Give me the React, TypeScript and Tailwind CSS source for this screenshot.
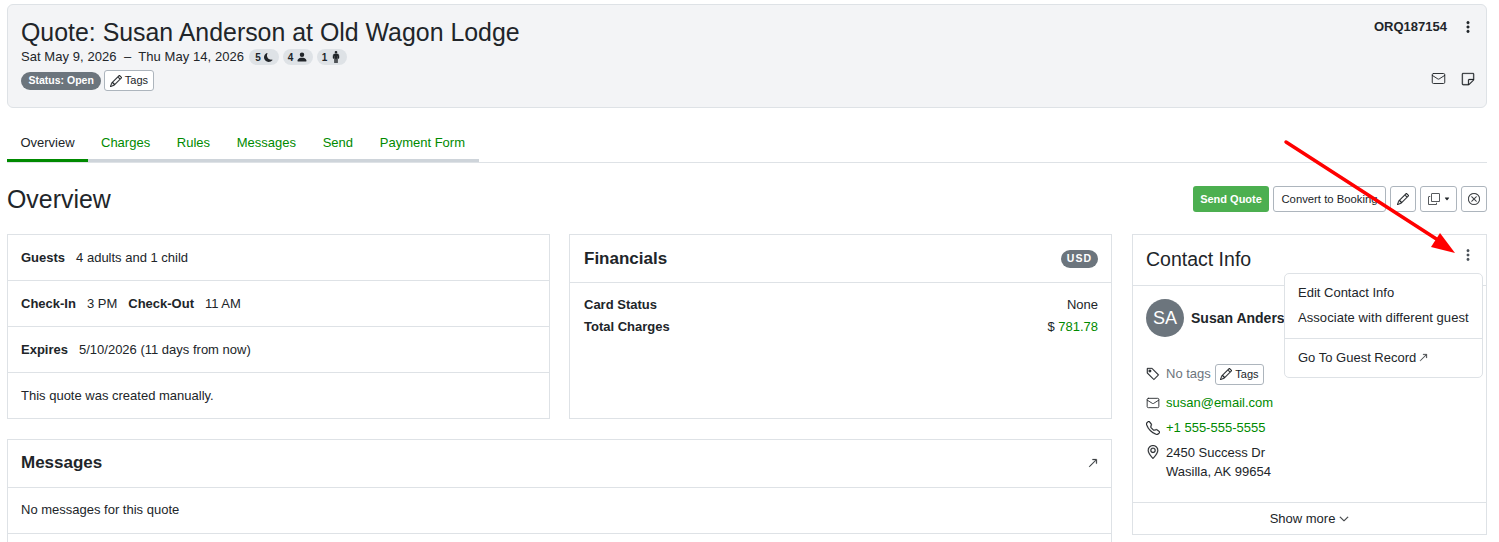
import React from 'react';
import { Mail } from 'lucide-react';
import {
  BsThreeDotsVertical,
  BsSticky,
  BsPencil,
  BsCopy,
  BsXCircle,
  BsTag,
  BsTelephone,
  BsGeoAlt,
  BsChevronDown,
  BsArrowUpRight,
  BsMoonFill,
  BsPersonFill,
  BsPersonStanding,
  BsCaretDownFill,
} from 'react-icons/bs';

const tabs = ['Charges', 'Rules', 'Messages', 'Send', 'Payment Form'];

const TagsButton = () => (
  <button className="flex h-[21px] items-center gap-[3px] rounded-[3px] border border-[#adb5bd] bg-white px-[4.5px] text-[11px] text-[#212529]">
    <BsPencil className="h-[12px] w-[12px] stroke-[0.4px]" />
    Tags
  </button>
);

const CountPill = ({ n, children }: { n: number; children: React.ReactNode }) => (
  <span className="flex h-[16px] w-[30px] items-center justify-center gap-[3px] rounded-full bg-[#dee2e6] text-[10px] font-bold text-[#212529]">
    {n}
    {children}
  </span>
);

const App = () => {
  return (
    <div className="relative h-[542px] w-[1499px] overflow-hidden bg-white pl-[7px] pr-[12px] pt-[4px] font-['Liberation_Sans',Arial,sans-serif] text-[13px] text-[#212529]">
      {/* Header */}
      <div className="flex h-[104px] justify-between rounded-[6px] border border-[#dee2e6] bg-[#f3f4f6] pl-[13px] pr-[11px]">
        <div>
          <h1 className="mt-[11px] text-[24.9px] leading-[32px]">Quote: Susan Anderson at Old Wagon Lodge</h1>
          <div className="-mt-[1px] flex h-[20px] items-center gap-[4px]">
            <span className="mr-[1px] tracking-[0.06px]">Sat May 9, 2026 &nbsp;–&nbsp; Thu May 14, 2026</span>
            <CountPill n={5}><BsMoonFill className="h-[9px] w-[9px]" /></CountPill>
            <CountPill n={4}><BsPersonFill className="h-[12px] w-[12px]" /></CountPill>
            <CountPill n={1}><BsPersonStanding className="h-[12px] w-[12px] stroke-[0.5px]" /></CountPill>
          </div>
          <div className="mt-[3px] flex items-center gap-[3px]">
            <span className="flex h-[18px] items-center rounded-full bg-[#6c757d] px-[7.5px] text-[10.5px] font-bold text-white">Status: Open</span>
            <TagsButton />
          </div>
        </div>
        <div className="flex flex-col items-end justify-between pb-[21px] pt-[12px]">
          <div className="flex items-center gap-[14px]">
            <span className="text-[13px] font-bold">ORQ187154</span>
            <BsThreeDotsVertical className="h-[14px] w-[14px] stroke-[0.5px]" />
          </div>
          <div className="flex items-center gap-[15px]">
            <Mail className="h-[15px] w-[15px]" strokeWidth={1.5} />
            <BsSticky className="h-[14px] w-[14px] stroke-[0.3px]" />
          </div>
        </div>
      </div>

      {/* Tabs */}
      <div className="mt-[19px] border-b border-[#dee2e6]">
        <div className="flex h-[35px] w-[472px] items-center border-b-[3px] border-[#ced4da]">
          <div className="-mb-[3px] flex h-[35px] w-[81px] items-center justify-center border-b-[3px] border-[#008a00]">Overview</div>
          <div className="flex items-center gap-[26.7px] whitespace-nowrap pl-[13px] text-[#008a00]">
            {tabs.map((t) => (
              <span key={t}>{t}</span>
            ))}
          </div>
        </div>
      </div>

      {/* Page heading */}
      <div className="mt-[23px] flex h-[26px] items-center justify-between">
        <h2 className="text-[24.9px] leading-[26px]">Overview</h2>
        <div className="flex items-center gap-[4px] text-[11px]">
          <button className="h-[26px] w-[76px] rounded-[3px] bg-[#4caf50] font-bold text-white">Send Quote</button>
          <button className="h-[26px] w-[113px] rounded-[3px] border border-[#adb5bd] text-[11.3px]">Convert to Booking</button>
          <button className="flex h-[26px] w-[26px] items-center justify-center rounded-[3px] border border-[#adb5bd]"><BsPencil className="h-[12px] w-[12px] stroke-[0.4px]" /></button>
          <button className="flex h-[26px] w-[37px] items-center justify-center gap-[4px] rounded-[3px] border border-[#adb5bd]"><BsCopy className="h-[12px] w-[12px]" /><BsCaretDownFill className="h-[6px] w-[6px]" /></button>
          <button className="flex h-[26px] w-[26px] items-center justify-center rounded-[3px] border border-[#adb5bd]"><BsXCircle className="h-[12px] w-[12px] stroke-[0.3px]" /></button>
        </div>
      </div>

      {/* Cards */}
      <div className="mt-[22px] grid grid-cols-[1105px_355px] gap-x-[20px]">
        <div className="flex flex-col gap-[20px]">
          <div className="grid grid-cols-[543px_543px] gap-x-[19px]">
            <div className="h-[185px] border border-[#dee2e6]">
              <div className="flex h-[46px] items-center gap-[11px] border-b border-[#dee2e6] pl-[13px]"><b>Guests</b><span>4 adults and 1 child</span></div>
              <div className="flex h-[46px] items-center border-b border-[#dee2e6] pl-[13px]"><b>Check-In</b><span className="ml-[11px]">3 PM</span><b className="ml-[11px]">Check-Out</b><span className="ml-[11px]">11 AM</span></div>
              <div className="flex h-[46px] items-center gap-[11px] border-b border-[#dee2e6] pl-[13px]"><b>Expires</b><span>5/10/2026 (11 days from now)</span></div>
              <div className="flex h-[45px] items-center pl-[13px]">This quote was created manually.</div>
            </div>
            <div className="h-[185px] border border-[#dee2e6]">
              <div className="flex h-[48px] items-center justify-between border-b border-[#dee2e6] pl-[14px] pr-[13px]">
                <b className="text-[17px]">Financials</b>
                <span className="flex h-[18px] items-center rounded-full bg-[#6c757d] px-[6px] text-[10.5px] font-bold tracking-[1px] text-white">USD</span>
              </div>
              <div className="pl-[14px] pr-[13px] pt-[11px] leading-[22px]">
                <div className="flex justify-between"><b>Card Status</b><span>None</span></div>
                <div className="flex justify-between"><b>Total Charges</b><span>$ <span className="text-[#008a00]">781.78</span></span></div>
              </div>
            </div>
          </div>
          <div className="border border-[#dee2e6]">
            <div className="flex h-[48px] items-center justify-between border-b border-[#dee2e6] pb-[2px] pl-[13px] pr-[13px]">
              <b className="text-[17px]">Messages</b>
              <BsArrowUpRight className="h-[10px] w-[10px] stroke-[0.6px]" />
            </div>
            <div className="flex h-[46px] items-center border-b border-[#dee2e6] pb-[2px] pl-[13px]">No messages for this quote</div>
            <div className="h-[40px]" />
          </div>
        </div>
        <div className="flex h-[301px] flex-col border border-[#dee2e6]">
          <div className="flex h-[51px] items-center justify-between border-b border-[#dee2e6] pl-[13px] pr-[11px]">
            <span className="text-[19.5px]">Contact Info</span>
            <BsThreeDotsVertical className="-mt-[10px] h-[14px] w-[14px] stroke-[0.3px] text-[#495057]" />
          </div>
          <div className="flex-1 pl-[13px] pt-[13px]">
            <div className="flex items-center gap-[7px]">
              <span className="flex h-[38px] w-[38px] items-center justify-center rounded-full bg-[#6c757d] text-[18px] text-white">SA</span>
              <b className="text-[14px]">Susan Anderson</b>
            </div>
            <div className="mt-[26px] flex h-[22px] items-center gap-[6px]">
              <BsTag className="h-[14px] w-[14px] stroke-[0.3px]" />
              <span className="-mr-[2px] text-[#6c757d]">No tags</span>
              <TagsButton />
            </div>
            <div className="mt-[8px] flex h-[20px] items-center gap-[6px]">
              <Mail className="h-[14px] w-[14px]" strokeWidth={1.5} />
              <span className="text-[#008a00]">susan@email.com</span>
            </div>
            <div className="mt-[5px] flex h-[20px] items-center gap-[6px]">
              <BsTelephone className="h-[14px] w-[14px] stroke-[0.3px]" />
              <span className="text-[#008a00]">+1 555-555-5555</span>
            </div>
            <div className="mt-[5px] flex gap-[6px] leading-[19px]">
              <BsGeoAlt className="mt-[2px] h-[14px] w-[14px] stroke-[0.3px]" />
              <span>2450 Success Dr<br />Wasilla, AK 99654</span>
            </div>
          </div>
          <div className="flex h-[32px] items-center justify-center gap-[4px] border-t border-[#dee2e6]">
            Show more <BsChevronDown className="h-[10px] w-[10px] stroke-[0.8px]" />
          </div>
        </div>
      </div>

      {/* Dropdown menu */}
      <div className="absolute left-[1284px] top-[273px] h-[105px] w-[199px] rounded-[5px] border border-[#dee2e6] bg-white">
        <div className="mt-[6px] flex h-[25px] items-center pl-[13px]">Edit Contact Info</div>
        <div className="flex h-[25px] items-center pl-[13px] tracking-[0.06px]">Associate with different guest</div>
        <div className="mt-[8px] border-t border-[#dee2e6]" />
        <div className="mt-[6px] flex h-[25px] items-center gap-[3px] pl-[13px]">Go To Guest Record <BsArrowUpRight className="h-[9px] w-[9px] stroke-[0.5px]" /></div>
      </div>

      {/* Annotation arrow */}
      <svg className="pointer-events-none absolute left-0 top-0" width="1499" height="542">
        <line x1="1286" y1="142" x2="1438" y2="240" stroke="#ff0000" strokeWidth="3.5" strokeLinecap="round" />
        <polygon points="1455,253 1431,247 1440,233" fill="#ff0000" />
      </svg>
    </div>
  );
};

export default App;
